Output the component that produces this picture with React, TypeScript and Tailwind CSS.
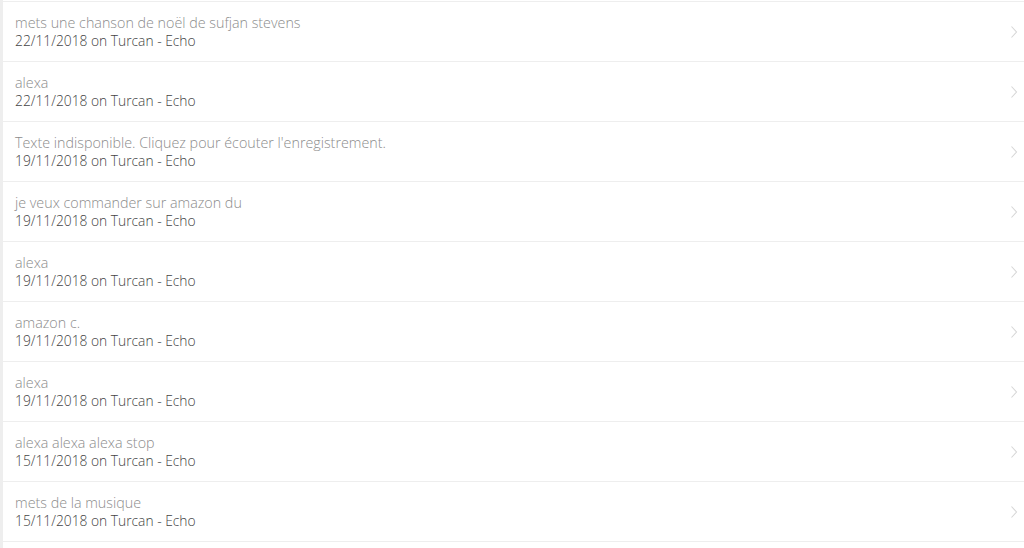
import React from "react";

const rows = [
  ["mets une chanson de noël de sufjan stevens", "22/11/2018 on Turcan - Echo"],
  ["alexa", "22/11/2018 on Turcan - Echo"],
  ["Texte indisponible. Cliquez pour écouter l'enregistrement.", "19/11/2018 on Turcan - Echo"],
  ["je veux commander sur amazon du", "19/11/2018 on Turcan - Echo"],
  ["alexa", "19/11/2018 on Turcan - Echo"],
  ["amazon c.", "19/11/2018 on Turcan - Echo"],
  ["alexa", "19/11/2018 on Turcan - Echo"],
  ["alexa alexa alexa stop", "15/11/2018 on Turcan - Echo"],
  ["mets de la musique", "15/11/2018 on Turcan - Echo"],
];

export default function App() {
  return (
    <div className="w-[1024px] h-[548px] overflow-hidden bg-white flex" style={{ fontFamily: '"Open Sans", "Noto Sans", sans-serif' }}>
      <div className="w-[3px] shrink-0 bg-[#eeeeee]" />
      <div className="flex-1 flex flex-col pt-px">
        <div className="h-px bg-[#eeeeee]" />
        {rows.map(([t, d], i) => (
          <div key={i} className="h-[60px] shrink-0 flex items-center border-b border-[#eeeeee] pl-3 pr-[6px]">
            <div className="flex-1 flex flex-col leading-[18px] pt-px">
              <span className="text-[14.3px] text-[#8c8c8c] font-light">{t}</span>
              <span className="text-[13.8px] text-[#444444] font-light">{d}</span>
            </div>
            <svg width="8" height="14" viewBox="0 0 8 14" className="shrink-0">
              <path d="M1.5 1.5 L6.5 7 L1.5 12.5" fill="none" stroke="#d6d6d6" strokeWidth="1.1" />
            </svg>
          </div>
        ))}
      </div>
    </div>
  );
}
